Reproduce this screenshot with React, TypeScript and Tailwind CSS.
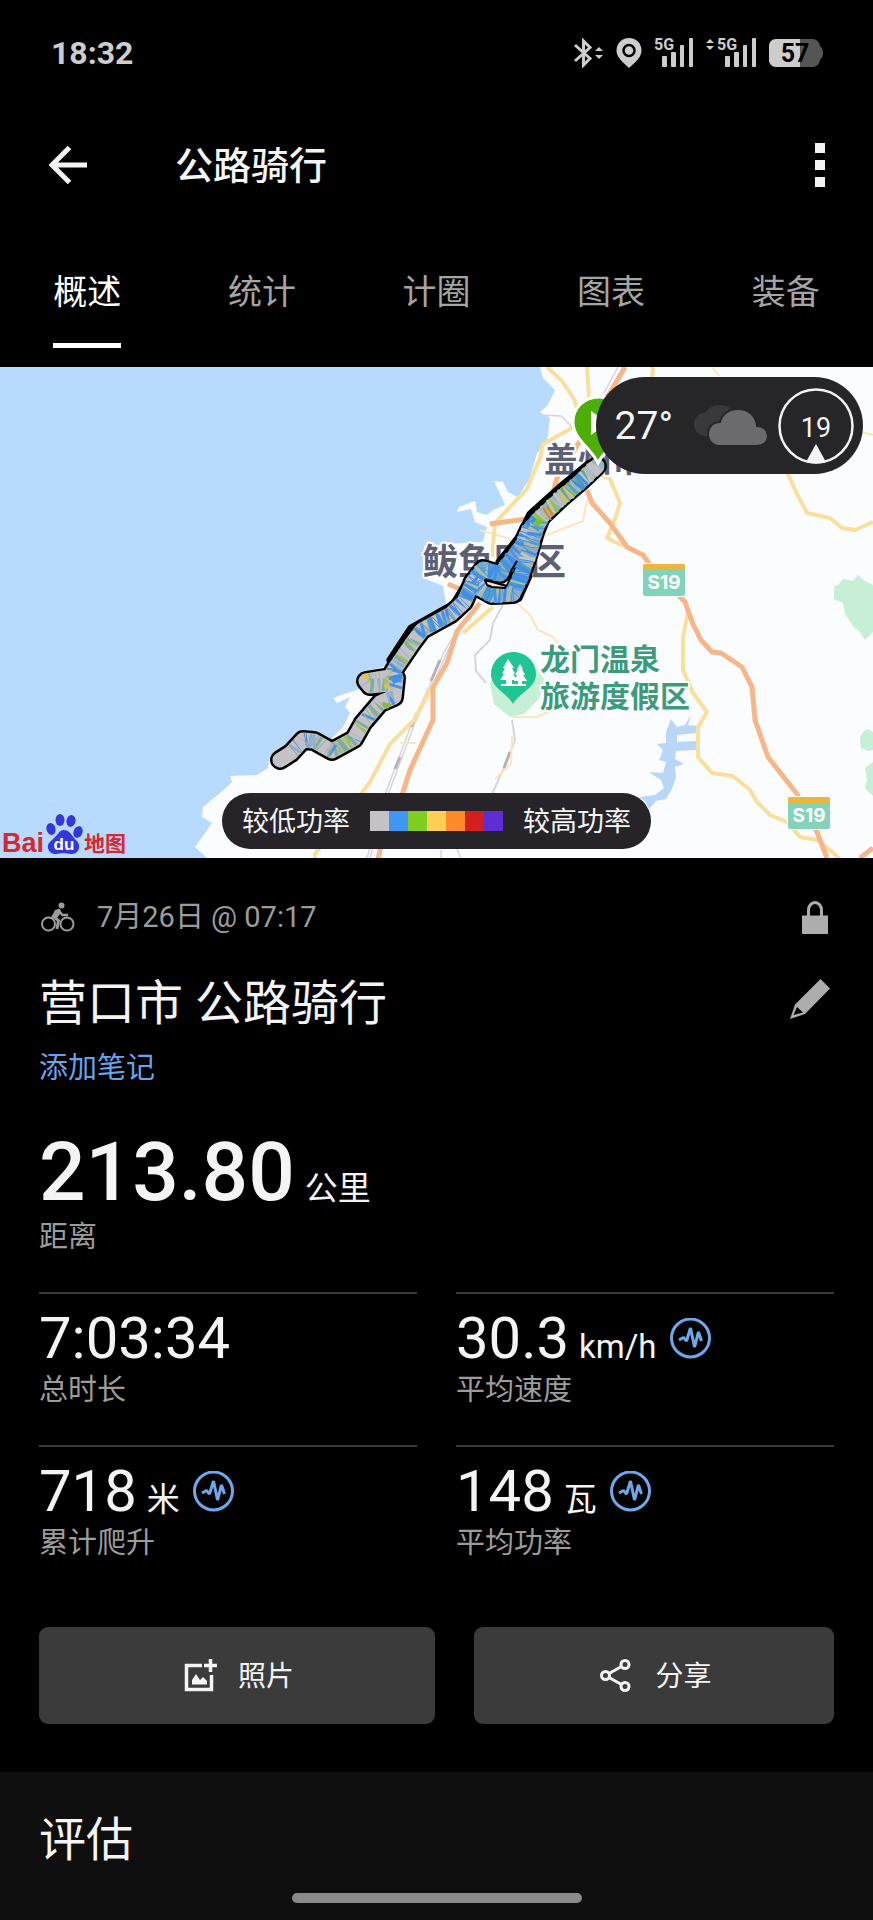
import { type ReactNode } from "react";

const tabs = ["概述", "统计", "计圈", "图表", "装备"];

const stats = [
    { value: "7:03:34", unit: "", label: "总时长", chart: false },
    { value: "30.3", unit: "km/h", label: "平均速度", chart: true },
    { value: "718", unit: "米", label: "累计爬升", chart: true },
    { value: "148", unit: "瓦", label: "平均功率", chart: true },
];

const powerColors = [
    "bg-[#c4c2c6]",
    "bg-[#3f97f3]",
    "bg-[#80cc20]",
    "bg-[#ffce54]",
    "bg-[#fc8a28]",
    "bg-[#d2201f]",
    "bg-[#5d2ed6]",
];

type Point = [number, number];

// Ridden track, north to south. The two branches split and rejoin near 鲅鱼圈区.
const trackNorth: Point[] = [[597, 466], [580, 482], [560, 499], [541, 517], [535, 532], [529, 553], [521, 576], [513, 594], [492, 595], [481, 589], [473, 582]];
const trackBranch: Point[] = [[541, 517], [529, 530], [522, 546], [508, 564], [500, 574], [483, 569], [473, 582]];
const trackSouth: Point[] = [[473, 582], [464, 602], [451, 614], [422, 630], [413, 642], [396, 667], [390, 677], [366, 681], [370, 686], [388, 684], [396, 678], [394, 697], [380, 703], [363, 723], [354, 739], [332, 751], [314, 741], [303, 740], [291, 753], [280, 760]];

const toPath = (points: Point[]) => "M" + points.map((p) => p.join(" ")).join("L");

const northPalette = ["#c4c2c6", "#8fc63a", "#3f8fe0", "#b9bfa0", "#d8c44a", "#5ca8a0", "#79b93a", "#c4c2c6"];
const coolPalette = ["#3f8fe8", "#3f8fe8", "#c4c2c6", "#4a95dc", "#8ea9bc", "#3f8fe8", "#a8bda6", "#4f9bc8"];
const southPalette = ["#c4c2c6", "#c4c2c6", "#4a93e2", "#b5b7ba", "#8fb0cc", "#c4c2c6", "#7fae9c", "#9cc05e"];

function stripes(points: Point[], half: number, pick: (y: number) => string[]) {
    const lines: { x1: number; y1: number; x2: number; y2: number; color: string; width: number }[] = [];
    let seed = 7;
    const rand = () => {
        seed = (seed * 16807) % 2147483647;
        return seed / 2147483647;
    };
    for (let i = 0; i < points.length - 1; i++) {
        const [ax, ay] = points[i];
        const [bx, by] = points[i + 1];
        const length = Math.hypot(bx - ax, by - ay);
        const angle = Math.atan2(by - ay, bx - ax) + Math.PI / 2;
        for (let d = 0; d < length; d += 2) {
            const x = ax + ((bx - ax) * d) / length;
            const y = ay + ((by - ay) * d) / length;
            const a = angle + (rand() - 0.5) * 0.6;
            const palette = pick(y);
            lines.push({
                x1: Math.round(x - Math.cos(a) * half),
                y1: Math.round(y - Math.sin(a) * half),
                x2: Math.round(x + Math.cos(a) * half),
                y2: Math.round(y + Math.sin(a) * half),
                color: palette[Math.floor(rand() * palette.length)],
                width: rand() > 0.5 ? 3 : 1,
            });
        }
    }
    return lines;
}

const trackStripes = [
    ...stripes(trackBranch, 8, () => coolPalette),
    ...stripes(trackNorth, 8, (y) => (y < 474 ? ["#c4c2c6"] : y < 522 ? northPalette : coolPalette)),
    ...stripes(trackSouth, 7, (y) => (y < 635 ? coolPalette : y > 753 ? ["#c4c2c6"] : southPalette)),
];

function BluetoothIcon() {
    return (
        <svg width="29" height="30" viewBox="0 0 29 30" fill="none" stroke="#cdcdcd" strokeWidth="3">
            <path d="M1 7L16 20.500L9.500 27V3L16 9.500L1 23" />
            <path d="M21 13l4-4 4 4zM21 17l4 4 4-4z" fill="#cdcdcd" stroke="none" />
        </svg>
    );
}

function LocationIcon() {
    return (
        <svg width="26" height="30" viewBox="0 0 26 30">
            <path d="M13 0C5.600 0 .5 5.600.5 12.500c0 4 2.200 7.500 5.500 11l7 6.500 7-6.500c3.300-3.500 5.500-7 5.500-11C25.500 5.600 20.400 0 13 0z" fill="#cdcdcd" />
            <circle cx="13" cy="12.500" r="5.500" fill="#cdcdcd" stroke="#000" strokeWidth="2.500" />
        </svg>
    );
}

function SignalIcon() {
    return (
        <svg className="overflow-visible" width="38" height="30" viewBox="0 0 38 30" fill="#cdcdcd">
            <text x="-1" y="12" fontSize="16" fontWeight="700">5G</text>
            <rect x="7" y="18" width="5" height="11" rx="1" />
            <rect x="16" y="14" width="5" height="15" rx="1" />
            <rect x="25" y="7" width="4" height="22" rx="1" />
            <rect x="34" y="0" width="4" height="29" rx="1" />
        </svg>
    );
}

function BatteryIcon() {
    return (
        <svg width="54" height="28" viewBox="0 0 54 28">
            <path d="M31 0h12c4 0 7 2 8 7 2 2 3 4 3 7s-1 5-3 7c-1 5-4 7-8 7H31z" fill="#555" />
            <path d="M7 0h24v28H7c-4 0-7-3-7-7V7c0-4 3-7 7-7z" fill="#cdcdcd" />
            <text x="26" y="23" textAnchor="middle" fontSize="25" fontWeight="700">57</text>
        </svg>
    );
}

function StatusBar() {
    return (
        <div className="flex h-[106px] items-center justify-between pr-[50px] pl-[51px]">
            <span className="text-[32px] font-bold text-[#cdcdcd]">18:32</span>
            <div className="flex items-center gap-[13px]">
                <BluetoothIcon />
                <LocationIcon />
                <SignalIcon />
                <div className="flex gap-[4px]">
                    <svg width="8" height="30" viewBox="0 0 8 30" fill="#cdcdcd">
                        <path d="M0 5l4-4 4 4zM0 8l4 4 4-4z" />
                    </svg>
                    <SignalIcon />
                </div>
                <BatteryIcon />
            </div>
        </div>
    );
}

function Header() {
    return (
        <header className="flex h-[118px] items-center pr-[48px] pl-[49px]">
            <button aria-label="返回">
                <svg width="38" height="38" viewBox="0 0 38 38" fill="none" stroke="#f4f4f4" strokeWidth="5">
                    <path d="M38 19H4M20.500 1.500L3 19l17.500 17.500" />
                </svg>
            </button>
            <h1 className="ml-[88px] flex-1 pt-[2px] text-[38px] font-medium text-[#f4f4f4]">公路骑行</h1>
            <button aria-label="更多" className="flex flex-col gap-[7px]">
                <span className="size-[10px] bg-[#f4f4f4]" />
                <span className="size-[10px] bg-[#f4f4f4]" />
                <span className="size-[10px] bg-[#f4f4f4]" />
            </button>
        </header>
    );
}

function Tabs() {
    return (
        <nav className="flex pt-[44px] pb-[19px]" role="tablist">
            {tabs.map((tab, index) => (
                <div key={tab} className="flex flex-1 justify-center">
                    <button
                        role="tab"
                        aria-selected={index === 0}
                        className={
                            index === 0
                                ? "border-b-[5px] border-white pb-[27px] text-[34px] leading-[48px] text-white"
                                : "border-b-[5px] border-transparent pb-[27px] text-[34px] leading-[48px] text-[#a5a5a5]"
                        }
                    >
                        {tab}
                    </button>
                </div>
            ))}
        </nav>
    );
}

function RoadSign({ x, y }: { x: number; y: number }) {
    return (
        <g>
            <rect x={x - 1} y={y - 1} width="44" height="34" rx="3" fill="#fff" />
            <rect x={x} y={y} width="42" height="32" rx="2" fill="#82d3b9" />
            <path d={`M${x} ${y + 6}v-4q0-2 2-2h38q2 0 2 2v4z`} fill="#eab63e" />
            <text x={x + 21} y={y + 25} textAnchor="middle" fontSize="19" fontWeight="700" fill="#fff" fontFamily="Inter, sans-serif">S19</text>
        </g>
    );
}

function BaiduLogo() {
    return (
        <g>
            <text x="2" y="852" fontSize="27" fontWeight="700" fill="#d9272f" fontFamily="Liberation Sans, sans-serif">Bai</text>
            <g fill="#3536dc">
                <ellipse cx="51" cy="829" rx="4.500" ry="6" transform="rotate(-15 51 829)" />
                <ellipse cx="60" cy="820" rx="4.500" ry="6" />
                <ellipse cx="71" cy="821" rx="4.500" ry="6" transform="rotate(12 71 821)" />
                <ellipse cx="78" cy="832" rx="4.500" ry="6" transform="rotate(20 78 832)" />
                <path d="M64 830c5 0 7 4 10 8 4 4 6 6 5 10-1 5-5 6-8 6-3 0-5-1-8-1s-4 1-7 1c-4 0-7-2-8-6s2-6 6-10c4-3 5-8 10-8z" />
            </g>
            <text x="64" y="850" textAnchor="middle" fontSize="17" fontWeight="700" fill="#fff" fontFamily="Liberation Sans, sans-serif">du</text>
            <text x="84" y="851" fontSize="21" fontWeight="700" fill="#d9272f">地图</text>
        </g>
    );
}

function RouteMap() {
    return (
        <svg viewBox="0 367 873 491" className="block w-full bg-[#fbfcfe]" fill="none" role="img" aria-label="骑行路线">
            {/* Sea */}
            <path
                fill="#b8dafe"
                d="M0 367H540L543 378L555 390L548 405L540 412L550 418L547 443L537 453L535 460L530 478L518 497L508 492L503 482L494 481L502 498L505 505L493 510L487 515L477 512L475 501L459 507L457 512L471 509L475 522L487 527L483 542L462 543L424 546L423 578L443 586L446 603L440 613L413 627L390 665L362 673L362 688L333 698L337 703L350 697L345 707L350 713L343 727L330 740L303 730L283 750L270 757L268 768L257 775L230 776L232 782L220 793L203 807L202 817L212 823L195 847L207 858H0z"
            />

            {/* Parks */}
            <g fill="#c6efd5">
                <path d="M834 587l5-3 4-5 10 2 5-6 7 6 8 4v47l-8 8-6-9-6-5-8-12-2-11-9-4z" />
                <path d="M860 737l4-6 4-2 5 3v18l-5 1-7-3zM865 768l8-6v34l-8-8 2-9z" />
                <path d="M490 684l10-16 36 0 10 14-8 18-14 14-14 3-16-13z" />
            </g>

            {/* Reservoir */}
            <path
                fill="#b8d6f8"
                d="M671 719l6 8 8-2 6-10-3 10 8 1v7l-19 2v7l19-1v9l-20 1-1 8 9 5-9 3 1 10-4 12-6 10-10 2-7 8-4-8-6-4 16-2 9-7-3-8-12-8 14 1 3-11-7-2 4-10-6-6 9-1v-11z"
            />

            {/* Minor roads and railway */}
            <g stroke="#d9d4dc" strokeWidth="1.500">
                <path d="M503 605l-10 18-3 17-15 15 1 16 10 12M512 720l3 20-12 30-11 24" strokeWidth="2" />
                <path d="M456 632l-12 20-15 35-17 36-26 69-19 66M459 632l-12 20-15 35-17 36-26 69-19 66M441 850v8M455 845l6 13" />
                <path d="M618 367l-14 26M573 428l-12-12-21-1M565 483l-22 30M625 368l-12 20" />
            </g>
            <path d="M440 660l-9 21M417 713l-6 14M400 757l-5 12M510 752l-6 16" stroke="#b5b0ba" strokeWidth="3" />
            <g stroke="#f8e8bd" strokeWidth="2">
                <path d="M517 603l13 12 8 15 15 7 9 12M512 717h25l26-12M512 736l-1 28-16 15M400 743h16M587 500l-4 21-36 14-20 8M712 367l7 9M862 432l11 3" />
                <path d="M480 530l40 12" />
            </g>

            {/* Provincial roads */}
            <g stroke="#fadf9c" strokeWidth="4" strokeLinejoin="round">
                <path d="M547 367l15 14 12 18 5 16M587 367l2 32M653 367l-1 12" />
                <path d="M572 428l-29 16-3 14-13 31-32 34-3 34M600 474l10 5 10 24-5 16-8 19 16 8" />
                <path d="M787 472l10 22 10 19 23 5 12 10 13 2 18-8" />
                <path d="M688 612l-5 25v33l10 23 14 19-9 15v30l14 16 21 3 17 14 7 12 13 13 17 7 13 15 17 3 13 10 10 9" />
                <path d="M493 607l-30 26M432 687l-18 33-24 24-20 38-12 16-43 56v10" />
            </g>

            {/* Expressways */}
            <g stroke="#f7b688" strokeWidth="5" strokeLinejoin="round">
                <path d="M625 367l-14 24-54 87-7 26-12 20M490 524l36-5M448 584l14 6" />
                <path d="M587 490l5 13 18 20 17 24 16 8 10 14 32 33 8 22 8 16 11 12 9 1 21 14 10 20 3 33 13 37 29 37 20 38 10 26" />
                <path d="M480 603l-23 28-10 32-14 24v33l-23 50-7 22-23 58-2 10M860 858l13-10" />
            </g>

            {/* Place names */}
            <g fill="#5b6075" stroke="#fff" strokeWidth="4" paintOrder="stroke" fontWeight="700" strokeLinejoin="round">
                <text x="544" y="472" fontSize="34">盖州市</text>
                <text x="422" y="575" fontSize="36">鲅鱼圈区</text>
            </g>
            <g fill="#3b9b7d" stroke="#fff" strokeWidth="4" paintOrder="stroke" fontSize="30" fontWeight="700" strokeLinejoin="round">
                <text x="540" y="670">龙门温泉</text>
                <text x="540" y="707">旅游度假区</text>
            </g>
            <RoadSign x={643} y={564} />
            <RoadSign x={788} y={797} />

            {/* Park pin */}
            <path d="M513 652c-12 0-22 10-22 22 0 14 15 18 22 30 7-12 23-16 23-30 0-12-10-22-23-22z" fill="#1fc593" />
            <path d="M508 659l-5 9h2l-3 6h2l-4 6h6v4h-5v2h25v-2h-4v-3h5l-4-6h2l-3-6h1l-3-5-3 5h1l-3 6h2l-3 6h4v3h-6v-4h5l-4-6h2l-3-6h2z" fill="#fff" />

            {/* Track */}
            <g strokeLinecap="round" strokeLinejoin="round">
                <g stroke="#000" strokeWidth="20">
                    <path d={toPath(trackNorth)} />
                    <path d={toPath(trackBranch)} />
                    <path d={toPath(trackSouth)} />
                </g>
                <path d="M588 464L560 487L530 514L518 538L499 562M466 583L454 603L450 606L411 628L390 660M310 735L332 743M529 576L519 598" stroke="#000" strokeWidth="7" />
                <g strokeWidth="15">
                    <path d={toPath(trackBranch)} stroke="#6fa6dc" />
                    <path d={toPath(trackNorth)} stroke="#8fb3cc" />
                    <path d={toPath(trackSouth)} stroke="#c4c2c6" />
                </g>
            </g>
            {trackStripes.map((line, index) => (
                <line key={index} x1={line.x1} y1={line.y1} x2={line.x2} y2={line.y2} stroke={line.color} strokeWidth={line.width} />
            ))}
            <path d="M485 580l18 5 3 1-1 2-13-1-5-2z" fill="#fde6d0" stroke="#000" strokeWidth="2" strokeLinejoin="round" />
            <path d="M508 581l3-10 6-10" stroke="#000" strokeWidth="2" />
            <path d="M543 508l8 12M547 506l6 10" stroke="#e0812c" strokeWidth="2" />
            <path d="M536 519l8 2-6 6-4-4z" fill="#77c22a" />
            <circle cx="366" cy="677" r="3" fill="#e2c53e" />
            <circle cx="387" cy="686" r="3" fill="#d9c04e" />
            <path d="M391 676l12-3-2 8-8 3z" fill="#3f8ff0" />
            <path d="M382 702l10 2-4 5-5-2z" fill="#8cb83c" />

            {/* Start marker */}
            <path d="M598 463c-8-16-25-24-25-41 0-14 11-25 26-25s26 11 26 25c0 17-19 25-27 41z" fill="#4cae06" stroke="#fff" strokeWidth="3" />
            <path d="M591 411l17 12-17 12z" fill="#fff" />

            <BaiduLogo />
        </svg>
    );
}

function WeatherPill() {
    return (
        <div className="absolute top-[10px] right-[10px] flex h-[97px] items-center rounded-full bg-[#262628] pr-[9px] pl-[19px] text-[#f4f4f4]">
            <span className="pt-[2px] text-[39px] leading-none">27°</span>
            <svg className="ml-[20px]" width="77" height="44" viewBox="0 0 77 44">
                <path d="M13 32C5 32 1 26 1 20c0-7 5-11 11-11C15 4 21 1 27 1c7 0 13 4 15 9v22z" fill="#39393b" />
                <path d="M27 42c-7 0-12-5-12-12s5-12 12-12C29 10 36 5 45 5c11 0 18 7 19 17 6 0 11 4 11 10s-5 10-11 10z" fill="#6b6b6d" stroke="#262628" strokeWidth="2" />
            </svg>
            <svg className="ml-[8px]" width="76" height="76" viewBox="0 0 76 76">
                <circle cx="38" cy="38" r="36.500" fill="none" stroke="#f4f4f4" strokeWidth="2.500" />
                <path d="M38 56l10 18q-10 3-20 0z" fill="#f4f4f4" />
                <text x="38" y="49" textAnchor="middle" fontSize="27" fill="#f4f4f4">19</text>
            </svg>
        </div>
    );
}

function PowerLegend() {
    return (
        <div className="absolute inset-x-0 bottom-[9px] flex justify-center">
            <div className="flex h-[56px] items-center gap-[20px] rounded-full bg-[#262428] px-[20px] text-[27px] text-[#f4f4f4]">
                <span className="pt-[2px]">较低功率</span>
                <div className="flex">
                    {powerColors.map((color) => (
                        <span key={color} className={`h-[20px] w-[19px] ${color}`} />
                    ))}
                </div>
                <span className="pt-[2px]">较高功率</span>
            </div>
        </div>
    );
}

function ChartButton({ label }: { label: string }) {
    return (
        <button aria-label={label} className="ml-[13px] self-center">
            <svg width="41" height="41" viewBox="0 0 41 41" fill="none" stroke="#6fa8ea">
                <circle cx="20.500" cy="20" r="19" strokeWidth="3" />
                <path d="M9 22l4.500-2.500 3 3.500 4-13 4 19 4-15 3 9" strokeWidth="3" strokeLinejoin="bevel" />
            </svg>
        </button>
    );
}

function ActionButton({ className, children }: { className: string; children: ReactNode }) {
    return (
        <button className={`flex h-[97px] items-center justify-center rounded-[9px] bg-[#3b3b3b] pl-[4px] text-[28px] text-[#f4f4f4] ${className}`}>
            {children}
        </button>
    );
}

function Summary() {
    return (
        <section className="px-[39px] pt-[35px] pb-[48px]">
            <div className="flex h-[48px] items-center justify-between">
                <div className="flex items-center gap-[22px] text-[29px] text-[#9c9c9c]">
                    <svg width="36" height="30" viewBox="0 0 36 30" fill="none" stroke="#9c9c9c" strokeWidth="2">
                        <circle cx="9.500" cy="22" r="6.500" />
                        <circle cx="28" cy="22" r="6.500" />
                        <circle cx="22.500" cy="3.500" r="3" fill="#9c9c9c" stroke="none" />
                        <path d="M20.500 7.500L14 14.500l5.500 4L18 27" strokeWidth="3" strokeLinejoin="round" />
                        <path d="M19.500 8.500l4 4.500H29" strokeWidth="2.500" />
                        <path d="M16 8l5-1 1 4-4 5-5-1z" fill="#9c9c9c" stroke="none" />
                    </svg>
                    <span className="pt-[2px]">7月26日 @ 07:17</span>
                </div>
                <svg className="mr-[6px]" width="26" height="33" viewBox="0 0 26 33">
                    <path d="M6.500 15V9a6.500 7.500 0 0 1 13 0v6" fill="none" stroke="#adadad" strokeWidth="3" />
                    <path d="M0 14.500h26V33H0z" fill="#adadad" />
                </svg>
            </div>

            <div className="mt-[30px] flex h-[64px] items-center justify-between">
                <h2 className="pt-[2px] text-[48px] text-[#f4f4f4]">营口市 公路骑行</h2>
                <button aria-label="编辑" className="mr-[4px] pb-[8px]">
                    <svg width="40" height="40" viewBox="0 0 40 40" fill="#adadad">
                        <path d="M30.500 0L40 9.500 15 35 0 40 5 25.500zM7 28L3.500 36 13 33.500z" fillRule="evenodd" />
                    </svg>
                </button>
            </div>
            <a href="#notes" className="mt-[13px] block text-[29px] leading-[40px] text-[#68a4ee]">添加笔记</a>

            <div className="mt-[42px] flex items-baseline gap-[10px] text-[#f4f4f4]">
                <span className="text-[82px] leading-[84px] font-medium">213.80</span>
                <span className="text-[33px] leading-[33px]">公里</span>
            </div>
            <p className="mt-[3px] text-[29px] leading-[40px] text-[#9c9c9c]">距离</p>

            <div className="mt-[35px] grid grid-cols-2 gap-x-[39px] gap-y-[35px]">
                {stats.map((stat) => (
                    <div key={stat.label} className="border-t-2 border-[#3a3a3a] pt-[14px]">
                        <div className="flex h-[60px] items-center text-[#f4f4f4]">
                            <div className="flex items-baseline gap-[10px]">
                                <span className="text-[58px] leading-[60px]">{stat.value}</span>
                                {stat.unit && <span className="text-[33px] leading-[33px]">{stat.unit}</span>}
                            </div>
                            {stat.chart && <ChartButton label={`${stat.label}图表`} />}
                        </div>
                        <p className="mt-[2px] text-[29px] leading-[40px] text-[#9c9c9c]">{stat.label}</p>
                    </div>
                ))}
            </div>

            <div className="mt-[64px] flex gap-[39px]">
                <ActionButton className="flex-[11] gap-[20px]">
                    <svg width="34" height="34" viewBox="0 0 34 34" fill="none" stroke="#f4f4f4">
                        <path d="M18 6.500H2.500v24h25V16" strokeWidth="3.500" />
                        <path d="M26.500 0v13M20 6.500h13" strokeWidth="3.500" />
                        <path d="M8 25.500v-4.500l4-6 4 6 3-3 4 4v3.500z" fill="#f4f4f4" stroke="none" />
                    </svg>
                    <span className="pt-[2px]">照片</span>
                </ActionButton>
                <ActionButton className="flex-[10] gap-[24px]">
                    <svg width="31" height="33" viewBox="0 0 31 33" fill="none" stroke="#f4f4f4" strokeWidth="3">
                        <circle cx="25" cy="5.500" r="4" />
                        <circle cx="5.500" cy="16.500" r="4" />
                        <circle cx="25" cy="27.500" r="4" />
                        <path d="M21.500 7.500L9 14.500M9 18.500l12.500 7" />
                    </svg>
                    <span className="pt-[2px]">分享</span>
                </ActionButton>
            </div>
        </section>
    );
}

export default function App() {
    return (
        <div className="flex min-h-screen flex-col bg-black font-['Roboto','Noto_Sans_CJK_SC',sans-serif]" lang="zh-CN">
            <StatusBar />
            <Header />
            <Tabs />
            <div className="relative overflow-hidden">
                <RouteMap />
                <WeatherPill />
                <PowerLegend />
            </div>
            <Summary />
            <section className="flex flex-1 flex-col bg-[#0f0f0f] px-[39px] pt-[36px] pb-[17px]">
                <h2 className="text-[47px] leading-[64px] text-[#f4f4f4]">评估</h2>
                <div className="mt-[21px] h-[10px] w-[290px] self-center rounded-full bg-[#8b8b8b]" />
            </section>
        </div>
    );
}
